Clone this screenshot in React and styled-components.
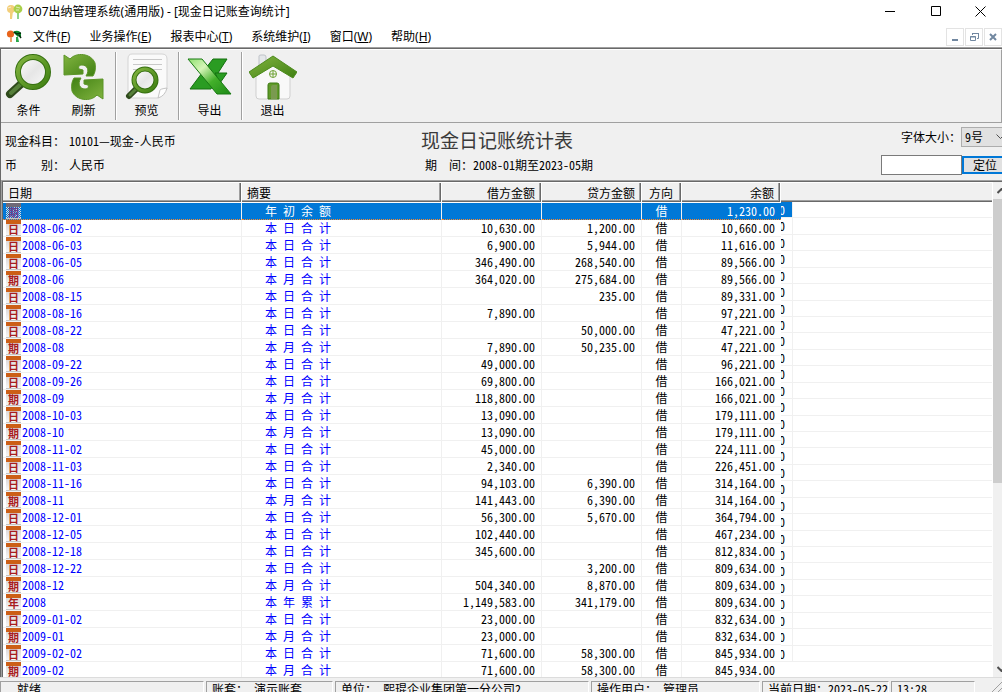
import React from 'react';
import styled, { createGlobalStyle } from 'styled-components';

const GlobalStyle = createGlobalStyle`
    body {
        margin: 0;
        background: #f0f0f0;
        overflow: hidden;
    }

    * {
        box-sizing: border-box;
    }

    button, input, select {
        font: inherit;
        color: inherit;
        padding: 0;
        margin: 0;
        border-radius: 0;
    }
`;

const Window = styled.div`
    display: flex;
    flex-direction: column;
    height: 100vh;
    overflow: hidden;
    background: #f0f0f0;
    color: #000;
    font-family: "Noto Sans Mono CJK SC", "Noto Sans CJK SC", sans-serif;
    font-size: 12px;
    line-height: 16px;
`;

const TitleBar = styled.header`
    display: flex;
    align-items: center;
    height: 24px;
    flex: none;
    padding-left: 6px;
    gap: 5px;
    background: #fff;
    font-family: "Noto Sans", "Noto Sans CJK SC", sans-serif;
`;

const TitleText = styled.div`
    flex: 1;
    white-space: nowrap;
`;

const CaptionButton = styled.button`
    display: flex;
    align-items: center;
    justify-content: center;
    width: ${props => props.$last ? 43 : 46}px;
    height: 22px;
    border: 0;
    background: none;
`;

const CaptionButtons = styled.div`
    display: flex;
    align-self: flex-start;
`;

const MenuBar = styled.nav`
    display: flex;
    align-items: center;
    height: 23px;
    flex: none;
    padding: 2px 0 0 6px;
    background: #fff;
    font-family: "Noto Sans", "Noto Sans CJK SC", sans-serif;
`;

const MenuItems = styled.div`
    display: flex;
    flex: 1;
    gap: 19px;
    padding-left: 10px;
`;

const MenuItem = styled.button`
    border: 0;
    background: none;
    white-space: nowrap;
`;

const MdiButtons = styled.div`
    display: flex;
    gap: 1px;
`;

const MdiButton = styled.button`
    display: flex;
    align-items: center;
    justify-content: center;
    width: 18px;
    height: 18px;
    border: 1px solid #e3e3e3;
    background: #fff;
`;

const Client = styled.main`
    display: flex;
    flex-direction: column;
    flex: 1;
    min-height: 0;
    border-top: 1px solid #a0a0a0;
    box-shadow: inset 1px 1px #696969;
    padding: 1px 0 0 1px;
`;

const ToolBar = styled.div`
    display: flex;
    flex: none;
    height: 74px;
    border-top: 1px solid #fff;
    border-right: 1px solid #a0a0a0;
    border-bottom: 1px solid #a0a0a0;
`;

const ToolButton = styled.button`
    display: flex;
    flex-direction: column;
    align-items: center;
    width: 55px;
    padding-top: 2px;
    gap: 3px;
    border: 0;
    background: none;
    font-family: "Noto Sans", "Noto Sans CJK SC", sans-serif;
`;

const Separator = styled.div`
    width: 2px;
    margin: 2px 2px 2px 4px;
    background: #a0a0a0;
    border-right: 1px solid #fff;
`;

const Info = styled.section`
    display: grid;
    grid-template-columns: 1fr auto 1fr;
    flex: none;
    height: 57px;
    padding-left: 4px;
`;

const InfoLines = styled.div`
    display: flex;
    flex-direction: column;
    gap: 8px;
    padding-top: 10px;
`;

const InfoLine = styled.div`
    display: flex;
    gap: 4px;
    white-space: pre;
`;

const Heading = styled.div`
    padding: 4px 0 0 7px;
`;

const Title = styled.h1`
    margin: 0 0 4px;
    color: #3a3a3a;
    font-size: 19px;
    font-weight: 300;
    line-height: 26px;
`;

const Period = styled.div`
    padding-left: 4px;
    white-space: pre;
`;

const Tools = styled.div`
    display: flex;
    flex-direction: column;
    align-items: flex-end;
    padding-top: 4px;
    gap: 8px;
`;

const ToolLine = styled.div`
    display: flex;
    align-items: center;
    height: 20px;
`;

const SelectBox = styled.div`
    display: grid;
    width: 41px;
    height: 20px;
    overflow: hidden;

    > * {
        grid-area: 1 / 1;
    }

    svg {
        align-self: center;
        justify-self: end;
        pointer-events: none;
    }
`;

const SizeSelect = styled.select`
    appearance: none;
    width: 100%;
    padding-left: 3px;
    border: 1px solid #adadad;
    border-right: 0;
    background: #e1e1e1;
`;

const SearchInput = styled.input`
    width: 81px;
    height: 20px;
    border: 1px solid #7a7a7a;
    background: #fff;
`;

const LocateButton = styled.button`
    width: 40px;
    height: 18px;
    padding-left: 9px;
    border: 2px solid #0078d7;
    border-right: 0;
    background: #e1e1e1;
    line-height: 14px;
    text-align: left;
    white-space: nowrap;
`;

const GridArea = styled.div`
    display: flex;
    flex: 1;
    min-height: 0;
    overflow: hidden;
    border-top: 1px solid #a0a0a0;
    border-left: 1px solid #a0a0a0;
    background: #fff;
    box-shadow: inset 1px 1px #696969;
    padding: 1px 0 0 1px;
`;

const Ledger = styled.table`
    flex: none;
    align-self: flex-start;
    table-layout: fixed;
    width: 778px;
    border-collapse: separate;
    border-spacing: 0;
`;

const HeadCell = styled.th`
    height: 21px;
    padding: 0 6px 0 5px;
    background: #f0f0f0;
    border: 1px solid #fff;
    border-left: 0;
    box-shadow: inset -1px -1px #696969, inset -2px -2px #a0a0a0;
    font-weight: 400;
    line-height: 18px;
    text-align: ${props => props.$align || 'left'};
`;

const Row = styled.tr`
    background: ${props => props.$selected ? '#0078d7' : '#fff'};
    color: ${props => props.$selected ? '#fff' : '#000'};
`;

const Cell = styled.td`
    height: 17px;
    padding: 0 6px;
    border-right: 1px solid #f0f0f0;
    border-bottom: 1px ${props => props.$selected ? 'dotted #ff8728' : 'solid #f0f0f0'};
    line-height: 16px;
    text-align: ${props => props.$align || 'left'};
    white-space: nowrap;

    &:last-child {
        border-right: 0;
    }
`;

const DateCell = styled(Cell)`
    padding: 0 0 0 3px;
    color: ${props => props.$selected ? '#fff' : '#0000ff'};
`;

const DateInner = styled.div`
    display: flex;
    gap: 1px;
    height: 16px;
`;

const SummaryCell = styled(Cell)`
    padding-left: 23px;
    color: ${props => props.$selected ? '#fff' : '#0000ff'};
    white-space: pre;
`;

const Tag = styled.span`
    width: 15px;
    height: 16px;
    border-top: 4px solid ${props => props.$selected ? '#6f6a78' : '#cc5f17'};
    border-bottom: 1px solid #c4c4c4;
    background: ${props => props.$selected
        ? 'repeating-conic-gradient(#0078d7 0 25%, #e0dcdc 0 50%) 0 0 / 2px 2px'
        : 'linear-gradient(#dedada, #f6f6f6)'};
    color: ${props => props.$selected ? '#6a3f8c' : '#a81c20'};
    font-size: 11px;
    font-weight: 700;
    line-height: 11px;
    text-align: center;
`;

const Rest = styled.div`
    display: flex;
    flex-direction: column;
    flex: 1;
    align-self: flex-start;
    min-width: 0;
`;

const RestHead = styled.div`
    height: 20px;
    border-top: 1px solid #fff;
    background: #f0f0f0;
    box-shadow: inset 0 -1px #696969, inset 0 -2px #a0a0a0;
`;

const RestBody = styled.div`
    display: grid;
    grid-auto-rows: 1fr;
    height: 460px;
`;

const RestRow = styled.div`
    display: flex;
    border-bottom: 1px solid #f0f0f0;
    min-height: 0;
`;

const Digit = styled.span`
    display: flex;
    width: 12px;
    border-right: 1px solid #f0f0f0;
    background: ${props => props.$selected ? '#0078d7' : '#fff'};
    color: ${props => props.$selected ? '#fff' : '#000'};
    line-height: 16px;
`;

const DigitClip = styled.span`
    display: flex;
    justify-content: flex-end;
    width: 4px;
    overflow: hidden;
`;

const ScrollBar = styled.div`
    display: flex;
    flex-direction: column;
    width: 9px;
    margin-left: 1px;
    overflow: hidden;
    background: #f0f0f0;
`;

const ScrollButton = styled.button`
    flex: none;
    display: flex;
    align-items: center;
    width: 17px;
    height: 17px;
    padding-left: 4px;
    border: 0;
    background: #f0f0f0;
`;

const Track = styled.div`
    flex: 1;
`;

const Thumb = styled.div`
    height: 61.5%;
    background: #cdcdcd;
`;

const StatusBar = styled.footer`
    display: flex;
    gap: 2px;
    flex: none;
    height: 15px;
    padding-top: 3px;
    border-top: 1px solid #dcdcdc;
    overflow: hidden;
`;

const StatusPanel = styled.div`
    flex: none;
    width: ${props => props.$width}px;
    height: 20px;
    padding-left: ${props => props.$indent || 5}px;
    border-top: 1px solid #a0a0a0;
    border-left: 1px solid #a0a0a0;
    border-right: 1px solid #fff;
    line-height: 13px;
    white-space: pre;
`;

const Grip = styled.svg`
    flex: none;
    margin-left: auto;
`;

const menus = [
    ['文件', 'F'],
    ['业务操作', 'E'],
    ['报表中心', 'T'],
    ['系统维护', 'I'],
    ['窗口', 'W'],
    ['帮助', 'H'],
];

const day = '本 日 合 计';
const month = '本 月 合 计';

// tag, date, summary, debit, credit, balance
const rows = [
    ['期', '', '年 初 余 额', '', '', '1,230.00'],
    ['日', '2008-06-02', day, '10,630.00', '1,200.00', '10,660.00'],
    ['日', '2008-06-03', day, '6,900.00', '5,944.00', '11,616.00'],
    ['日', '2008-06-05', day, '346,490.00', '268,540.00', '89,566.00'],
    ['期', '2008-06', month, '364,020.00', '275,684.00', '89,566.00'],
    ['日', '2008-08-15', day, '', '235.00', '89,331.00'],
    ['日', '2008-08-16', day, '7,890.00', '', '97,221.00'],
    ['日', '2008-08-22', day, '', '50,000.00', '47,221.00'],
    ['期', '2008-08', month, '7,890.00', '50,235.00', '47,221.00'],
    ['日', '2008-09-22', day, '49,000.00', '', '96,221.00'],
    ['日', '2008-09-26', day, '69,800.00', '', '166,021.00'],
    ['期', '2008-09', month, '118,800.00', '', '166,021.00'],
    ['日', '2008-10-03', day, '13,090.00', '', '179,111.00'],
    ['期', '2008-10', month, '13,090.00', '', '179,111.00'],
    ['日', '2008-11-02', day, '45,000.00', '', '224,111.00'],
    ['日', '2008-11-03', day, '2,340.00', '', '226,451.00'],
    ['日', '2008-11-16', day, '94,103.00', '6,390.00', '314,164.00'],
    ['期', '2008-11', month, '141,443.00', '6,390.00', '314,164.00'],
    ['日', '2008-12-01', day, '56,300.00', '5,670.00', '364,794.00'],
    ['日', '2008-12-05', day, '102,440.00', '', '467,234.00'],
    ['日', '2008-12-18', day, '345,600.00', '', '812,834.00'],
    ['日', '2008-12-22', day, '', '3,200.00', '809,634.00'],
    ['期', '2008-12', month, '504,340.00', '8,870.00', '809,634.00'],
    ['年', '2008', '本 年 累 计', '1,149,583.00', '341,179.00', '809,634.00'],
    ['日', '2009-01-02', day, '23,000.00', '', '832,634.00'],
    ['期', '2009-01', month, '23,000.00', '', '832,634.00'],
    ['日', '2009-02-02', day, '71,600.00', '58,300.00', '845,934.00'],
    ['期', '2009-02', month, '71,600.00', '58,300.00', '845,934.00'],
];

function AppLogo({ left, right, stem }) {
    return (
        <svg width="17" height="16" viewBox="0 0 17 16">
            <path d="M4 7h3l-1 8H4z" fill={left} />
            <circle cx="5" cy="5" r="4" fill={left} />
            <path d="M11 8h2v7h-2z" fill={stem} />
            <circle cx="12" cy="5" r="4.4" fill={right} />
            <path d="M2 4l3-1M10 3l4 1M10 6h3" stroke="#fff" strokeOpacity=".6" />
        </svg>
    );
}

function MenuLogo() {
    return (
        <svg width="17" height="16" viewBox="0 0 17 16">
            <circle cx="4.5" cy="5" r="3.6" fill="#e8641b" />
            <path d="M4 8h2v5H4z" fill="#e9a56c" />
            <path d="M7 3q5-3 8 1v4l-2-1-1 1-2-2z" fill="#0c8a2c" />
            <path d="M8 3l3 2 4-1M13 6l2 3" stroke="#052b0c" strokeWidth="1.5" fill="none" />
            <path d="M10 8h2l1 5h-3z" fill="#2ba84a" />
        </svg>
    );
}

function Lens({ cx, cy, r, width, hx, hy, handle }) {
    const edge = r * 0.8;
    return (
        <g>
            <path d={`M${hx} ${hy}L${cx - edge} ${cy + edge}`} stroke="#2f4a1c" strokeWidth={handle} strokeLinecap="round" />
            <path d={`M${hx + 1} ${hy - 1}L${cx - edge} ${cy + edge}`} stroke="#56803a" strokeWidth={handle / 2} strokeLinecap="round" />
            <circle cx={cx} cy={cy} r={r} fill="url(#glass)" stroke="#356f10" strokeWidth={width + 1} />
            <circle cx={cx} cy={cy} r={r} fill="none" stroke="url(#leaf)" strokeWidth={width - 1} />
        </g>
    );
}

function FindIcon() {
    return (
        <svg width="48" height="48" viewBox="0 0 48 48">
            <defs>
                <linearGradient id="leaf" x1="0" y1="0" x2="1" y2="1">
                    <stop offset="0" stopColor="#82b440" />
                    <stop offset="1" stopColor="#3f8012" />
                </linearGradient>
                <linearGradient id="glass" x1="0" y1="0" x2="1" y2="1">
                    <stop offset="0" stopColor="#fff" />
                    <stop offset=".5" stopColor="#e6e6e6" />
                    <stop offset="1" stopColor="#fafafa" />
                </linearGradient>
            </defs>
            <Lens cx={28} cy={20} r={15} width={5} hx={5} hy={42} handle={8} />
        </svg>
    );
}

function RefreshIcon() {
    const arrow = 'M4 3L10 7C16 0 31 1 35 11C36 17 35 21 33 24L26 24C30 18 27 13 22 13C19 13 18 15 19 17L23 18V22L4 23Z';
    return (
        <svg width="48" height="48" viewBox="0 0 48 48">
            <path d={arrow} fill="url(#leaf)" stroke="#5b9427" />
            <path d={arrow} fill="url(#leaf)" stroke="#5b9427" transform="rotate(180 23.5 25)" />
        </svg>
    );
}

function PreviewIcon() {
    return (
        <svg width="48" height="48" viewBox="0 0 48 48">
            <path d="M9 2H39Q44 2 44 7V37L35 46H9Q5 46 5 41V7Q5 2 9 2Z" fill="#fafafa" stroke="#d4d4d4" />
            <path d="M44 36Q37 37 37 38L35 46Q42 44 44 36Z" fill="#fff" stroke="#c4c4c4" />
            <path d="M10 7.5H39M10 12.5H39M10 17.5H39" stroke="#c9c9c9" />
            <Lens cx={22} cy={28} r={11} width={4} hx={6} hy={44} handle={6} />
        </svg>
    );
}

function ExportIcon() {
    return (
        <svg width="48" height="48" viewBox="-2 -6 48 48">
            <defs>
                <linearGradient id="sheet" x1="0" y1="0" x2="1" y2="1">
                    <stop offset="0" stopColor="#8ee070" />
                    <stop offset=".3" stopColor="#d6f5b8" />
                    <stop offset=".6" stopColor="#43b02a" />
                    <stop offset="1" stopColor="#1d8a17" />
                </linearGradient>
            </defs>
            <path d="M25 1H39L30 15L23 31H2L14 15Z" fill="#2a9c22" stroke="#14700f" />
            <path d="M27 15H39L32 25Z" fill="#2a9c22" stroke="#14700f" />
            <path d="M0 1H14L43 36H29Z" fill="url(#sheet)" stroke="#187a13" />
        </svg>
    );
}

function ExitIcon() {
    return (
        <svg width="48" height="48" viewBox="0 0 48 48">
            <path d="M10 4Q10 3 12 3H15Q17 3 17 5V17H10Z" fill="#e4e7ea" stroke="#bfc3c8" />
            <path d="M7 21L24 10L41 21V44Q41 47 38 47H10Q7 47 7 44Z" fill="#f8f8f8" stroke="#cfcfcf" />
            <path d="M0 20L24 4L48 20L44 26L24 14L4 26Z" fill="url(#leaf)" stroke="#4c8a1c" />
            <circle cx="24" cy="22" r="3.5" fill="#f8f8f8" stroke="#6ca032" />
            <path d="M24 19V25M21 22H27" stroke="#6ca032" />
            <path d="M19 47V33Q19 31 21 31H28Q30 31 30 33V47Z" fill="#5f9a28" stroke="#3f7a14" />
            <path d="M22 47V35Q22 33 24 33H28V47Z" fill="#7a9a50" />
        </svg>
    );
}

const Chevron = ({ up }) => (
    <svg width="9" height="6" viewBox="0 0 9 6">
        <path d={up ? 'M.5 5L4.5 1L8.5 5' : 'M.5 1L4.5 5L8.5 1'} fill="none" stroke="#505050" strokeWidth="2" />
    </svg>
);

export default function App() {
    return (
        <Window>
            <GlobalStyle />
            <TitleBar>
                <AppLogo left="#f3cf7a" right="#a9cf4a" stem="#8fd28a" />
                <TitleText>007出纳管理系统(通用版) - [现金日记账查询统计]</TitleText>
                <CaptionButtons>
                    <CaptionButton aria-label="最小化">
                        <svg width="11" height="11"><path d="M0 5.5H10" stroke="#000" /></svg>
                    </CaptionButton>
                    <CaptionButton aria-label="最大化">
                        <svg width="11" height="11"><path d="M.5 .5H9.5V9.5H.5Z" fill="none" stroke="#000" /></svg>
                    </CaptionButton>
                    <CaptionButton aria-label="关闭" $last>
                        <svg width="11" height="11"><path d="M.5 .5L10.5 10.5M10.5 .5L.5 10.5" stroke="#000" /></svg>
                    </CaptionButton>
                </CaptionButtons>
            </TitleBar>
            <MenuBar>
                <MenuLogo />
                <MenuItems>
                    {menus.map(([name, key]) => (
                        <MenuItem key={key}>{name}(<u>{key}</u>)</MenuItem>
                    ))}
                </MenuItems>
                <MdiButtons>
                    <MdiButton aria-label="最小化子窗口">
                        <svg width="10" height="10"><path d="M2 8H8" stroke="#7187a0" strokeWidth="2" /></svg>
                    </MdiButton>
                    <MdiButton aria-label="还原子窗口">
                        <svg width="10" height="10" fill="none" stroke="#7187a0">
                            <path d="M3.5 3V1.5H9.5V6.5H8M3 1.5H10M1.5 4.5H6.5V8.5H1.5ZM1 5H7" />
                        </svg>
                    </MdiButton>
                    <MdiButton aria-label="关闭子窗口">
                        <svg width="10" height="10"><path d="M2 2L8 8M8 2L2 8" stroke="#7187a0" strokeWidth="2" /></svg>
                    </MdiButton>
                </MdiButtons>
            </MenuBar>
            <Client>
                <ToolBar>
                    <ToolButton><FindIcon />条件</ToolButton>
                    <ToolButton><RefreshIcon />刷新</ToolButton>
                    <Separator />
                    <ToolButton><PreviewIcon />预览</ToolButton>
                    <Separator />
                    <ToolButton><ExportIcon />导出</ToolButton>
                    <Separator />
                    <ToolButton><ExitIcon />退出</ToolButton>
                </ToolBar>
                <Info>
                    <InfoLines>
                        <InfoLine><span>现金科目：</span><span>10101—现金-人民币</span></InfoLine>
                        <InfoLine><span>币　　别：</span><span>人民币</span></InfoLine>
                    </InfoLines>
                    <Heading>
                        <Title>现金日记账统计表</Title>
                        <Period>期　间：2008-01期至2023-05期</Period>
                    </Heading>
                    <Tools>
                        <ToolLine>
                            <label htmlFor="size">字体大小：</label>
                            <SelectBox>
                                <SizeSelect id="size" defaultValue="9号">
                                    <option>9号</option>
                                </SizeSelect>
                                <svg width="6" height="6" viewBox="0 0 6 6">
                                    <path d="M.5 .5L4.5 4.5L8.5 .5" fill="none" stroke="#505050" />
                                </svg>
                            </SelectBox>
                        </ToolLine>
                        <ToolLine>
                            <SearchInput aria-label="定位" />
                            <LocateButton>定位</LocateButton>
                        </ToolLine>
                    </Tools>
                </Info>
                <GridArea>
                    <Ledger>
                        <colgroup>
                            <col width="239" />
                            <col width="200" />
                            <col width="100" />
                            <col width="100" />
                            <col width="40" />
                            <col width="99" />
                        </colgroup>
                        <thead>
                            <tr>
                                <HeadCell>日期</HeadCell>
                                <HeadCell>摘要</HeadCell>
                                <HeadCell $align="right">借方金额</HeadCell>
                                <HeadCell $align="right">贷方金额</HeadCell>
                                <HeadCell $align="center">方向</HeadCell>
                                <HeadCell $align="right">余额</HeadCell>
                            </tr>
                        </thead>
                        <tbody>
                            {rows.map(([tag, date, summary, debit, credit, balance], i) => {
                                const selected = i === 0;
                                return (
                                    <Row key={i} $selected={selected}>
                                        <DateCell $selected={selected}>
                                            <DateInner><Tag $selected={selected}>{tag}</Tag>{date}</DateInner>
                                        </DateCell>
                                        <SummaryCell $selected={selected}>{summary}</SummaryCell>
                                        <Cell $selected={selected} $align="right">{debit}</Cell>
                                        <Cell $selected={selected} $align="right">{credit}</Cell>
                                        <Cell $selected={selected} $align="center">借</Cell>
                                        <Cell $selected={selected} $align="right">{balance}</Cell>
                                    </Row>
                                );
                            })}
                        </tbody>
                    </Ledger>
                    <Rest>
                        <RestHead />
                        <RestBody>
                            {rows.map((row, i) => (
                                <RestRow key={i}>
                                    <Digit $selected={i === 0}><DigitClip>0</DigitClip></Digit>
                                </RestRow>
                            ))}
                        </RestBody>
                    </Rest>
                    <ScrollBar>
                        <ScrollButton aria-label="向上"><Chevron up /></ScrollButton>
                        <Track><Thumb /></Track>
                        <ScrollButton aria-label="向下"><Chevron /></ScrollButton>
                    </ScrollBar>
                </GridArea>
            </Client>
            <StatusBar>
                <StatusPanel $width={204} $indent={16}>就绪</StatusPanel>
                <StatusPanel $width={127}>账套： 演示账套</StatusPanel>
                <StatusPanel $width={254}>单位： 熙琨企业集团第一分公司2</StatusPanel>
                <StatusPanel $width={169}>操作用户： 管理员</StatusPanel>
                <StatusPanel $width={127}>当前日期：2023-05-22</StatusPanel>
                <StatusPanel $width={84}>13:28</StatusPanel>
                <Grip width="11" height="14">
                    <path d="M0 12L12 0M4 14L14 4" stroke="#a0a0a0" />
                </Grip>
            </StatusBar>
        </Window>
    );
}
